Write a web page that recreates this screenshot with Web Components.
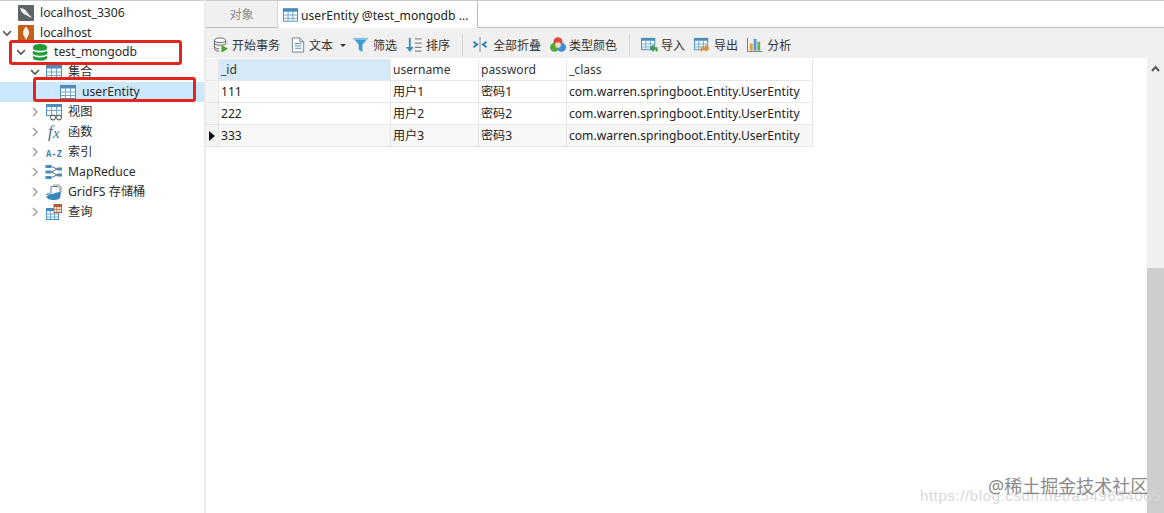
<!DOCTYPE html>
<html lang="zh"><head><meta charset="utf-8"><title>Navicat</title>
<style>
html,body{margin:0;padding:0;background:#fff;height:513px;overflow:hidden}
body{font:12.1px/20px "Noto Sans","Noto Sans CJK SC",sans-serif;color:#222}
</style></head><body>
<app-shell>
  <tree-panel slot="tree">
    <tree-row depth="0" icon="mysql">localhost_3306</tree-row>
    <tree-row depth="0" icon="mongo" arrow="open">localhost</tree-row>
    <tree-row depth="1" icon="db" arrow="open" style="margin-top:-1px">test_mongodb</tree-row>
    <tree-row depth="2" icon="table" arrow="open">集合</tree-row>
    <tree-row depth="3" icon="table" selected>userEntity</tree-row>
    <tree-row depth="2" icon="view" arrow="closed">视图</tree-row>
    <tree-row depth="2" icon="fx" arrow="closed">函数</tree-row>
    <tree-row depth="2" icon="az" arrow="closed">索引</tree-row>
    <tree-row depth="2" icon="mr" arrow="closed">MapReduce</tree-row>
    <tree-row depth="2" icon="gridfs" arrow="closed">GridFS 存储桶</tree-row>
    <tree-row depth="2" icon="query" arrow="closed">查询</tree-row>
    <red-mark style="left:9px;top:39px;width:167px;height:19px"></red-mark>
    <red-mark style="left:33px;top:76px;width:157px;height:19px"></red-mark>
  </tree-panel>
  <tab-bar slot="tabs"></tab-bar>
  <tool-bar slot="tools">
    <tool-btn icon="tx" gap="2" style="padding-right:8px">开始事务</tool-btn>
    <tool-btn icon="doc" gap="2" caret>文本</tool-btn>
    <tool-btn icon="filter">筛选</tool-btn>
    <tool-btn icon="sort">排序</tool-btn>
    <tool-sep></tool-sep>
    <tool-btn icon="collapse" gap="4">全部折叠</tool-btn>
    <tool-btn icon="color" gap="2">类型颜色</tool-btn>
    <tool-sep style="margin-right:9px"></tool-sep>
    <tool-btn icon="import">导入</tool-btn>
    <tool-btn icon="export">导出</tool-btn>
    <tool-btn icon="chart">分析</tool-btn>
  </tool-bar>
  <data-grid slot="grid"></data-grid>
</app-shell>
<script>
const ICONS={
mysql:`<rect x="1" y="0" width="16" height="16" rx="1" fill="#5f6468"/><path d="M3 3c3 0 5 1 7 4 1 2 3 3 5 6-3-1-4-2-6-3-2 0-5-3-6-7z" fill="#eceff1"/>`,
mongo:`<rect x="1" y="0" width="16" height="16" rx="1" fill="#c4601a"/><path d="M9 1.500c2.500 3 3.500 5 3 7.500-.5 2-2 3-2.500 5.500h-1C8 12 6.500 11 6 9c-.5-2.500.5-4.500 3-7.500z" fill="#f6efe6"/>`,
db:`<g fill="#1f9c35"><path d="M2 3c0-4 14-4 14 0v1.500c0 3-14 3-14 0z"/><path d="M2 6.500c2 2.500 12 2.500 14 0v3c0 3-14 3-14 0z"/><path d="M2 11.500c2 2.500 12 2.500 14 0V14c0 3.500-14 3.500-14 0z"/></g>`,
table:`<rect x="1.500" y="1.500" width="15" height="13" fill="#fff" stroke="#4a8dbd"/><rect x="1" y="1" width="16" height="3.500" fill="#4a8dbd"/><path d="M1.500 8h15M1.500 11.500h15M6.500 4v10M11.500 4v10" stroke="#6da6cf" fill="none"/>`,
view:`<rect x="1.500" y="0.500" width="15" height="11" fill="#fff" stroke="#4a8dbd"/><rect x="1" y="0" width="16" height="3" fill="#4a8dbd"/><path d="M1.500 6.500h15M6.500 3v8M11.500 3v8" stroke="#6da6cf" fill="none"/><circle cx="8" cy="13.500" r="2.500" fill="#fff" stroke="#444"/><circle cx="14" cy="13.500" r="2.500" fill="#fff" stroke="#444"/>`,
fx:`<text x="3" y="13" font-family="Liberation Serif,serif" font-style="italic" font-size="17" fill="#46708f">f</text><text x="8" y="14" font-family="Liberation Serif,serif" font-style="italic" font-size="15" fill="#46708f">x</text>`,
az:`<text x="1" y="12.500" font-family="Liberation Mono,monospace" font-weight="700" font-size="10" fill="#3f7eaa" textLength="16" lengthAdjust="spacingAndGlyphs">A-Z</text>`,
query:`<rect x="1.500" y="4.500" width="12" height="11" fill="#fff" stroke="#4a8dbd"/><rect x="1" y="4" width="13" height="3" fill="#4a8dbd"/><path d="M1.500 10h12M1.500 13h12M5.500 7v8M9.500 7v8" stroke="#6da6cf" fill="none"/><rect x="9" y="0.500" width="7.500" height="8" fill="#fff" stroke="#b5583a"/><rect x="9" y="0.500" width="7.500" height="2.500" fill="#b5583a"/><path d="M11.500 3v5M14 3v5M9 5.500h7.500" stroke="#cf8a72" fill="none"/>`,
gridfs:`<path d="M6 2.500h7l2 2v6H6z" fill="#fff" stroke="#6b7a85"/><path d="M8 1h6l2 2v5" fill="none" stroke="#8a98a2"/><path d="M1.500 10c3-2.500 5-.5 8-1 2.500-.5 5-1 6-1v4c0 3-3 4-7 4-3.500 0-7-1-7-4z" fill="#3a87bd"/><path d="M2 12c2-3 5-3 7-2" stroke="#fff" fill="none"/>`,
mr:`<g fill="#4a8dbd"><rect x="0.500" y="1" width="6" height="3"/><rect x="0.500" y="6.500" width="6" height="3"/><rect x="0.500" y="12" width="6" height="3"/><rect x="12" y="3.500" width="5" height="3"/><rect x="12" y="9.500" width="5" height="3"/></g><path d="M6.500 2.500l5.500 2.500M6.500 8l5.500-3M6.500 8l5.500 3M6.500 13.500l5.500-2.500" stroke="#5e6b75" fill="none"/>`,
tx:`<ellipse cx="7.500" cy="3.500" rx="6" ry="2.500" fill="#fff" stroke="#666"/><path d="M1.500 3.500v9c0 1.500 2.500 2.500 5 2.500M13.500 3.500v4M1.500 6.500c0 3 12 3 12 0M1.500 10c0 2 3 2.500 5 2.500" fill="none" stroke="#666"/><path d="M9 8.500l7 4-7 4z" fill="#3fa535"/>`,
doc:`<path d="M2.500 1h8l4 4v11h-12z" fill="#fff" stroke="#6f7d88"/><path d="M10.500 1v4h4" fill="#dfe6eb" stroke="#6f7d88"/><path d="M5 7h7M5 9.500h7M5 12h7" stroke="#4a8dbd" fill="none"/>`,
filter:`<path d="M0 1h16l-6 7v8l-4-2.500V8z" fill="#3f9bd8"/><path d="M0 1h16l-2 2.300H2z" fill="#7cc1ec"/>`,
sort:`<path d="M4 1v11" stroke="#3f87c9" stroke-width="2" fill="none"/><path d="M0 10.500h8L4 16z" fill="#3f87c9"/><path d="M9.500 2h7M9.500 6.500h7M9.500 11h7M9.500 15h7" stroke="#666" fill="none"/>`,
collapse:`<path d="M8.500 0v16" stroke="#7b8a95" fill="none"/><path d="M1.500 5l4 3-4 3" stroke="#2f7fb6" stroke-width="2" fill="none"/><path d="M15.500 5l-4 3 4 3" stroke="#2f7fb6" stroke-width="2" fill="none"/>`,
color:`<circle cx="8.500" cy="5" r="4.800" fill="#e8483c"/><circle cx="4.800" cy="11" r="4.800" fill="#59a83a"/><circle cx="12.200" cy="11" r="4.800" fill="#3f8fd0"/><circle cx="8.500" cy="8.500" r="3" fill="#f5d9c2"/>`,
import:`<rect x="0.500" y="1.500" width="14" height="12" fill="#fff" stroke="#4a8dbd"/><rect x="0" y="1" width="15" height="3" fill="#4a8dbd"/><path d="M0.500 7.500h14M0.500 10.500h14M5 4v9.500M10 4v9.500" stroke="#6da6cf" fill="none"/><path d="M16.500 15.500v-3.500h-5M13.500 9l-3 3 3 3" stroke="#3d9b45" stroke-width="2" fill="none"/>`,
export:`<rect x="0.500" y="1.500" width="14" height="12" fill="#fff" stroke="#4a8dbd"/><rect x="0" y="1" width="15" height="3" fill="#4a8dbd"/><path d="M0.500 7.500h14M0.500 10.500h14M5 4v9.500M10 4v9.500" stroke="#6da6cf" fill="none"/><path d="M8 15.500v-3.500h6M12 9l3 3-3 3" stroke="#e8912d" stroke-width="2" fill="none"/>`,
chart:`<path d="M0.500 1v14.500H16" stroke="#777" fill="none"/><rect x="3" y="7" width="3" height="7.500" fill="#e3a23c"/><rect x="7" y="2" width="3" height="12.500" fill="#4a9bd1"/><rect x="11" y="5" width="3" height="9.500" fill="#69ad57"/>`
};
const svg=(n,w=18,h=17)=>`<svg width="${w}" height="${h}" viewBox="0 0 18 17" style="display:block;flex:none;overflow:visible" aria-hidden="true">${ICONS[n]||''}</svg>`;
function def(name,html,setup){customElements.define(name,class extends HTMLElement{
  constructor(){super();this.attachShadow({mode:'open'})}
  connectedCallback(){this.shadowRoot.innerHTML=typeof html==='function'?html(this):html;setup&&setup(this)}
})}
def('app-shell',`<style>
:host{display:grid;grid-template-columns:206px 1fr;grid-template-rows:28px 30px 1fr;width:1164px;height:513px;overflow:hidden;position:relative}
.t{grid-row:1/4;display:flex;border-right:2px solid #ebebeb;box-sizing:border-box}
.w1,.w2{position:absolute;white-space:nowrap;pointer-events:none}
.w1{left:988px;top:474px;font:18px/24px "Noto Sans","Noto Sans CJK SC",sans-serif;color:#6e6e6e;opacity:.8}
.w2{left:920px;top:486px;font:15px/20px "Liberation Sans",sans-serif;color:#d8d8d8;letter-spacing:.6px}
</style>
<div class="t"><slot name="tree"></slot></div><slot name="tabs"></slot><slot name="tools"></slot><slot name="grid"></slot>
<div class="w2">https://blog.csdn.net/a549654065</div><div class="w1">@稀土掘金技术社区</div>`);
def('tree-panel',`<style>:host{display:block;width:100%;padding-top:2px;position:relative;border-top:1px solid #ccc;box-sizing:border-box;font-size:12.2px}</style><slot></slot>`);
def('tree-row',h=>{const d=+h.getAttribute('depth'),a=h.getAttribute('arrow');
 const arrow=a==='open'?`<path d="M0 3l4 4 4-4" stroke="#555" stroke-width="1.600" fill="none"/>`:a==='closed'?`<path d="M2 1l4 4-4 4" stroke="#a6a6a6" stroke-width="1.600" fill="none"/>`:'';
 const pad=3+d*14;
 return `<style>:host{display:flex;align-items:center;height:20px;padding-left:${pad}px;white-space:nowrap;color:#2b2b2b;${h.hasAttribute('selected')?'background:#cce8ff;':''}}
 .a{width:10px;height:10px;margin-right:4px;flex:none}.l{margin-left:5px}</style>
 <svg class="a" viewBox="0 0 10 10">${arrow}</svg>${svg(h.getAttribute('icon'))}<span class="l"><slot></slot></span>`});
def('red-mark',`<style>:host{display:block;position:absolute;border:3px solid #e2261f;border-radius:3px;pointer-events:none}</style>`);
def('tab-bar',`<style>:host{display:flex;height:28px;box-sizing:border-box;border-top:1px solid #c8c8c8;background:#fff}
.tb{display:flex;align-items:center;height:27px;box-sizing:border-box;white-space:nowrap;padding-top:2px}
.o{width:72px;justify-content:center;background:#f0f0f0;color:#8a8a8a;border-bottom:1px solid #bdbdbd;border-right:1px solid #d8d8d8}
.u{width:200px;background:#fff;padding-left:4px;gap:2px;border-right:1px solid #bdbdbd;color:#222;letter-spacing:.03px}
.r{flex:1;border-bottom:1px solid #bdbdbd;height:27px;box-sizing:border-box}</style>
<div class="tb o">对象</div><div class="tb u">${svg('table',17,17)}<span>userEntity @test_mongodb ...</span></div><div class="r"></div>`);
def('tool-bar',`<style>:host{display:flex;align-items:center;height:30px;background:#f0f0f0;padding-left:5px;padding-top:4px;box-sizing:border-box;font-size:12px}</style><slot></slot>`);
def('tool-btn',h=>`<style>:host{display:flex;align-items:center;gap:${h.getAttribute('gap')||3}px;padding:0 7px 0 2px;height:26px;white-space:nowrap;color:#333}
.c{width:0;height:0;border:3px solid transparent;border-top:3px solid #333;border-bottom:0;margin-left:5px;margin-right:-2px}
span{position:relative;top:1px}</style>
${svg(h.getAttribute('icon'),17,16)}<span><slot></slot></span>${h.hasAttribute('caret')?'<i class="c"></i>':''}`);
def('tool-sep',`<style>:host{display:block;width:1px;height:22px;background:#d8d8d8;margin:0 7px 0 5px}</style>`);
const ROWS=[['111','用户1','密码1'],['222','用户2','密码2'],['333','用户3','密码3']];
const CLS='com.warren.springboot.Entity.UserEntity';
def('data-grid',`<style>
:host{display:flex;height:455px;background:#fff}
.main{flex:1;min-width:0;padding-top:1px}
.g{display:grid;grid-template-columns:13px 172px 88px 88px 246px;grid-auto-rows:22px;width:max-content}
.c{box-sizing:border-box;padding-left:2px;line-height:21px;border-right:1px solid #e6e6e6;border-bottom:1px solid #e6e6e6;white-space:nowrap;overflow:hidden}
.g .h{background:#fff;color:#333}.g .sel{background:#d6e9f9}
.g .n{background:#f4f4f4;padding:0;display:flex;align-items:center;justify-content:center}
.alt{background:#f7f7f7}
.ar{width:0;height:0;border-left:6px solid #111;border-top:5px solid transparent;border-bottom:5px solid transparent}
.sb{width:17px;background:#f0f0f0;display:flex;flex-direction:column;align-items:center}
.up{height:210px;width:100%;padding-top:7px;box-sizing:border-box;display:flex;justify-content:center}
.th{flex:1;width:100%;background:#cdcdcd}
</style>
<div class="main"><div class="g">
<div class="c n"></div><div class="c h sel">_id</div><div class="c h">username</div><div class="c h">password</div><div class="c h">_class</div>
${ROWS.map((r,i)=>{const a=i==2?' alt':'';return `<div class="c n">${i==2?'<i class="ar"></i>':''}</div>`+r.concat(CLS).map(t=>`<div class="c${a}">${t}</div>`).join('')}).join('')}
</div></div>
<div class="sb"><div class="up"><svg width="9" height="7" viewBox="0 0 9 7"><path d="M1 6l3.500-4L8 6" stroke="#555" stroke-width="2" fill="none"/></svg></div><div class="th"></div></div>`);
</script>
</body></html>
